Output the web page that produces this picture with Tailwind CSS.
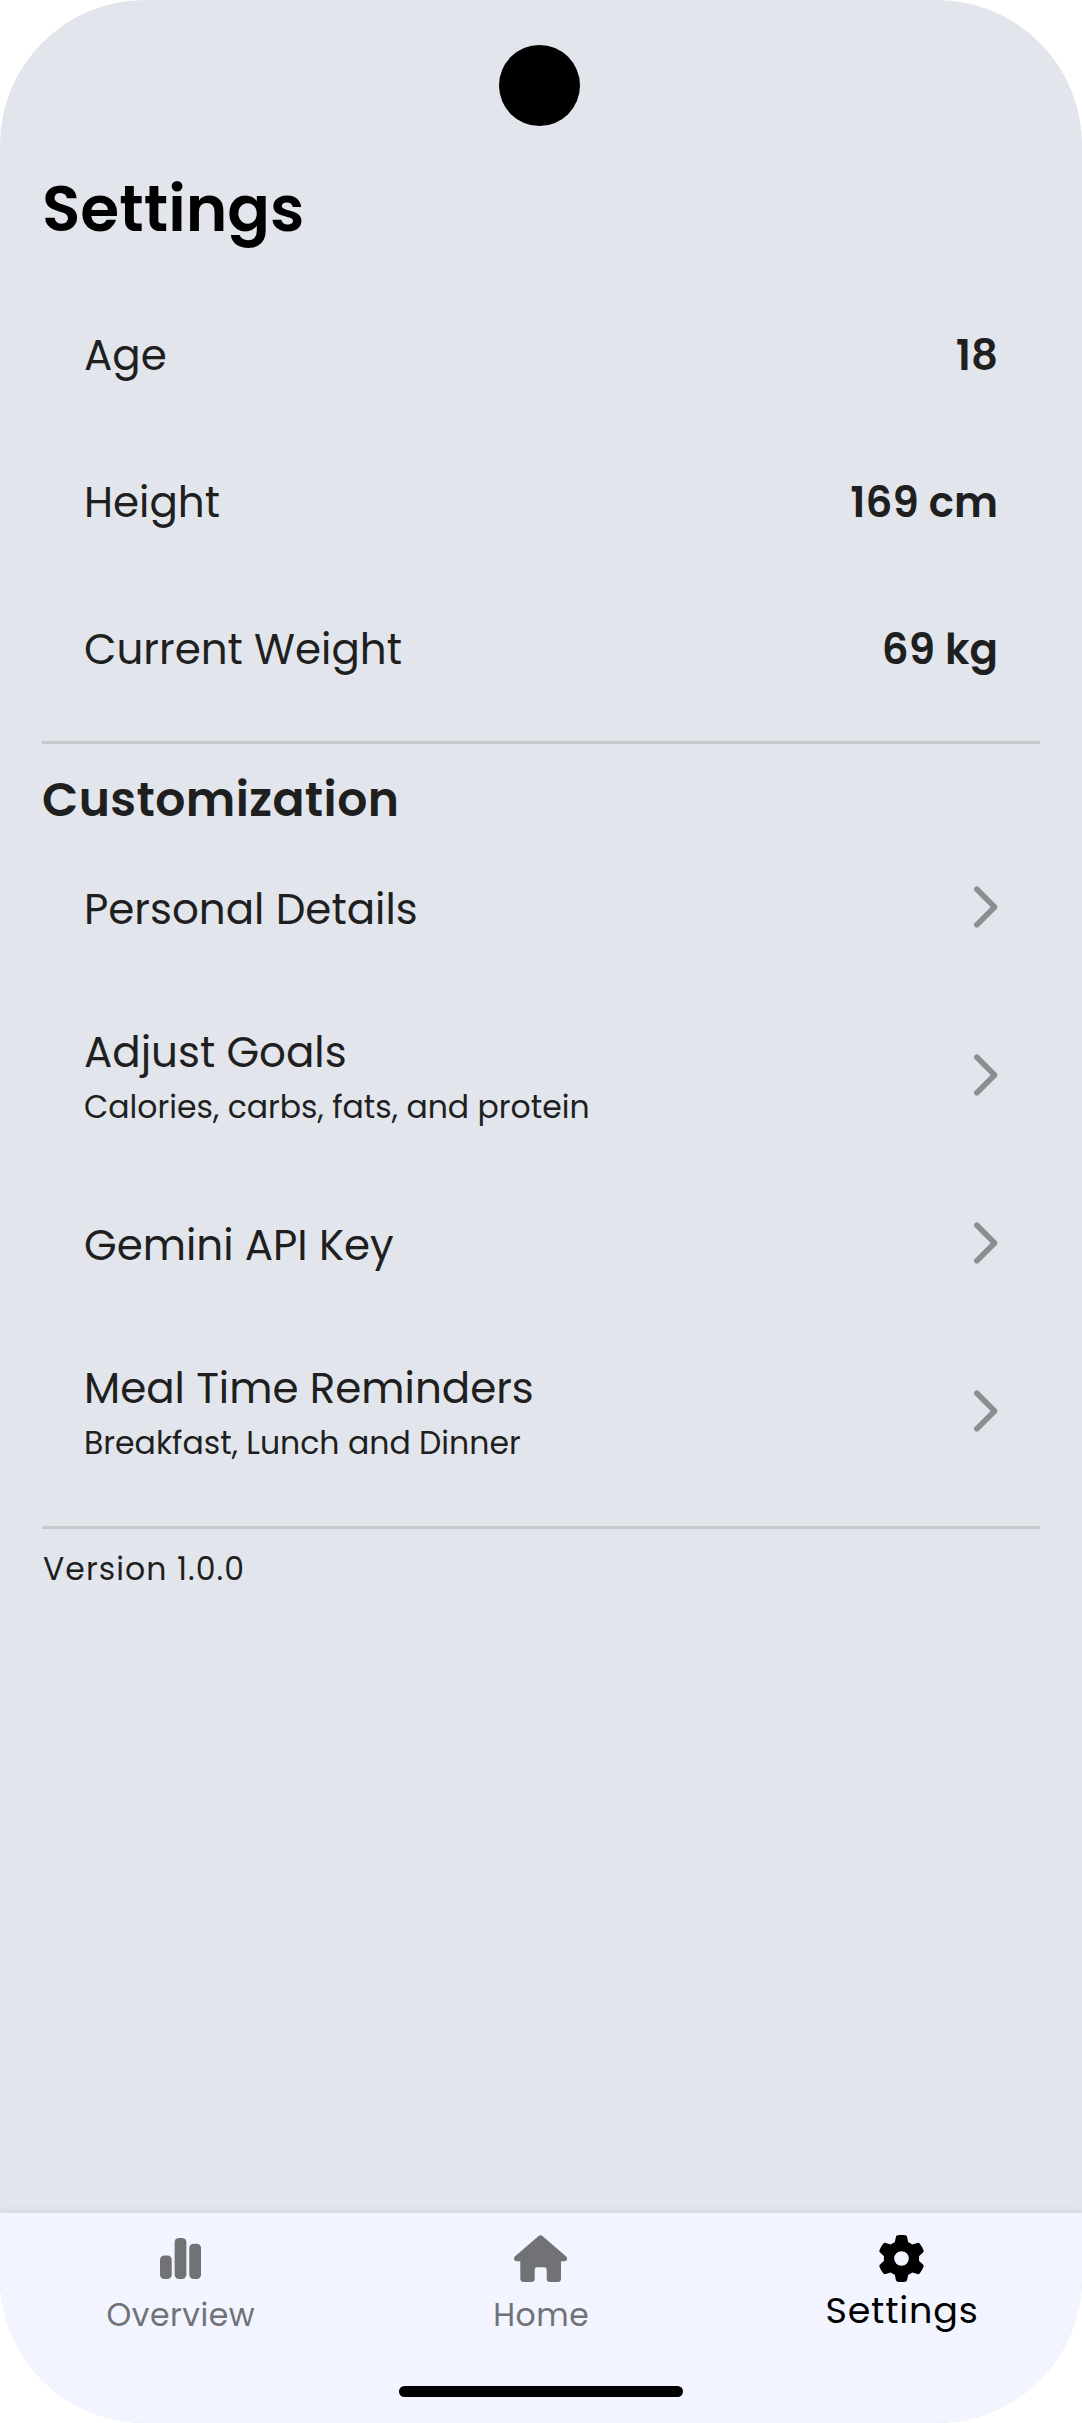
<!DOCTYPE html>
<html lang="en">
<head>
<meta charset="utf-8">
<title>Settings</title>
<script src="https://cdn.jsdelivr.net/npm/@tailwindcss/browser@4"></script>
</head>
<body class="bg-white font-[Poppins,Inter,sans-serif] text-[#1f1f1f]">
<div class="relative flex h-[2423px] w-[1081.5px] flex-col overflow-hidden rounded-[145px] bg-[#e2e5ec]">
  <div class="absolute left-[499px] top-[45px] size-[81px] rounded-full bg-black"></div>

  <main class="flex flex-1 flex-col pl-[42px] pr-[41.5px] pt-[163px]">
    <h1 class="text-[63px] leading-[93px] font-semibold text-black">Settings</h1>

    <dl class="mt-[26px] px-[42px] text-[42px]">
      <div class="flex h-[147px] items-center justify-between"><dt>Age</dt><dd class="font-semibold">18</dd></div>
      <div class="flex h-[147px] items-center justify-between"><dt>Height</dt><dd class="font-semibold">169 cm</dd></div>
      <div class="flex h-[147px] items-center justify-between"><dt>Current Weight</dt><dd class="font-semibold">69 kg</dd></div>
    </dl>

    <div class="mt-[18px] h-[3px] bg-[#c7c9cc]"></div>
    <h2 class="mt-[33px] text-[47.25px] leading-[46px] font-semibold tracking-[0.4px]">Customization</h2>

    <ul class="px-[42px]">
      <li class="flex h-[168px] items-center justify-between">
        <span class="pt-1.5 text-[42px] leading-[58px]">Personal Details</span>
        <svg class="h-[42px] w-[24px]" viewBox="0 0 24 42" fill="none" stroke="#8c8d90" stroke-width="5.6" stroke-linecap="round" stroke-linejoin="round"><path d="M2.9 3.3 20.6 21 2.9 38.7"/></svg>
      </li>
      <li class="flex h-[168px] items-center justify-between">
        <div class="pt-[2px]"><p class="text-[42px] leading-[62px]">Adjust Goals</p><p class="text-[31.5px] leading-[46px]">Calories, carbs, fats, and protein</p></div>
        <svg class="h-[42px] w-[24px]" viewBox="0 0 24 42" fill="none" stroke="#8c8d90" stroke-width="5.6" stroke-linecap="round" stroke-linejoin="round"><path d="M2.9 3.3 20.6 21 2.9 38.7"/></svg>
      </li>
      <li class="flex h-[168px] items-center justify-between">
        <span class="pt-1.5 text-[42px] leading-[58px]">Gemini API Key</span>
        <svg class="h-[42px] w-[24px]" viewBox="0 0 24 42" fill="none" stroke="#8c8d90" stroke-width="5.6" stroke-linecap="round" stroke-linejoin="round"><path d="M2.9 3.3 20.6 21 2.9 38.7"/></svg>
      </li>
      <li class="flex h-[168px] items-center justify-between">
        <div class="pt-[2px]"><p class="text-[42px] leading-[62px]">Meal Time Reminders</p><p class="text-[31.5px] leading-[46px]">Breakfast, Lunch and Dinner</p></div>
        <svg class="h-[42px] w-[24px]" viewBox="0 0 24 42" fill="none" stroke="#8c8d90" stroke-width="5.6" stroke-linecap="round" stroke-linejoin="round"><path d="M2.9 3.3 20.6 21 2.9 38.7"/></svg>
      </li>
    </ul>

    <div class="mt-[31px] h-[3px] bg-[#c7c9cc]"></div>
    <p class="mt-[18px] pl-px text-[31.5px] leading-[44px] tracking-[1.05px]">Version 1.0.0</p>
  </main>

  <nav class="relative grid h-[210px] grid-cols-3 bg-[#f2f4ff] text-[#717276] shadow-[0_-1px_8px_rgba(0,0,0,0.09)]">
    <a class="flex flex-col items-center pt-[22px]">
      <svg class="h-[47px] w-[41px]" viewBox="0 0 448 512" fill="currentColor"><rect x="0" y="224" width="128" height="256" rx="46"/><rect x="160" y="32" width="128" height="448" rx="46"/><rect x="320" y="96" width="128" height="384" rx="46"/></svg>
      <span class="mt-[10.5px] ml-px text-[31.5px] leading-[44px] tracking-[0.5px]">Overview</span>
    </a>
    <a class="flex flex-col items-center pt-[22px]">
      <svg class="h-[47px] w-[53px]" viewBox="0 0 53 47" fill="currentColor"><path d="M24.6 1Q26.5-.7 28.4 1L51.9 21.3Q53.7 23 52.8 24.8 52 26.3 50 26.3H47V43.5Q47 47 43.5 47H36Q32.7 47 32.7 43.8V35Q32.7 32.3 30 32.3H23.4Q20.7 32.3 20.7 35V43.8Q20.7 47 17.4 47H9.8Q6.3 47 6.3 43.5V26.3H3Q1 26.3.3 24.8-.6 23 1.1 21.3Z"/></svg>
      <span class="mt-[10.5px] ml-px text-[31.5px] leading-[44px] tracking-[0.5px]">Home</span>
    </a>
    <a class="flex flex-col items-center pt-[22px] text-black">
      <svg class="size-[47px]" viewBox="0 0 512 512" fill="currentColor"><path d="M495.9 166.6c3.2 8.7 .5 18.4-6.4 24.6l-43.3 39.4c1.1 8.3 1.7 16.8 1.7 25.4s-.6 17.1-1.7 25.4l43.3 39.4c6.9 6.2 9.6 15.9 6.4 24.6c-4.4 11.9-9.7 23.3-15.8 34.3l-4.7 8.1c-6.6 11-14 21.4-22.1 31.2c-5.9 7.2-15.7 9.6-24.5 6.8l-55.7-17.7c-13.4 10.3-28.2 18.9-44 25.4l-12.5 57.1c-2 9.1-9 16.3-18.2 17.8c-13.8 2.3-28 3.5-42.5 3.5s-28.7-1.2-42.5-3.5c-9.2-1.5-16.2-8.7-18.2-17.8l-12.5-57.1c-15.8-6.5-30.6-15.1-44-25.4L83.1 425.9c-8.8 2.8-18.6 .3-24.5-6.8c-8.1-9.8-15.5-20.2-22.1-31.2l-4.7-8.1c-6.1-11-11.4-22.4-15.8-34.3c-3.2-8.7-.5-18.4 6.4-24.6l43.3-39.4C64.6 273.1 64 264.6 64 256s.6-17.1 1.7-25.4L22.4 191.2c-6.9-6.2-9.6-15.9-6.4-24.6c4.4-11.9 9.7-23.3 15.8-34.3l4.7-8.1c6.6-11 14-21.4 22.1-31.2c5.9-7.2 15.7-9.6 24.5-6.8l55.7 17.7c13.4-10.3 28.2-18.9 44-25.4l12.5-57.1c2-9.1 9-16.3 18.2-17.8C227.3 1.2 241.5 0 256 0s28.7 1.2 42.5 3.5c9.2 1.5 16.2 8.7 18.2 17.8l12.5 57.1c15.8 6.5 30.6 15.1 44 25.4l55.7-17.7c8.8-2.8 18.6-.3 24.5 6.8c8.1 9.8 15.5 20.2 22.1 31.2l4.7 8.1c6.1 11 11.4 22.4 15.8 34.3zM256 336a80 80 0 1 0 0-160 80 80 0 1 0 0 160z"/></svg>
      <span class="mt-[7px] ml-[1.5px] text-[36.5px] leading-[44px] tracking-[0.8px]">Settings</span>
    </a>
    <div class="absolute left-[399px] top-[173px] h-[11px] w-[284px] rounded-full bg-black"></div>
  </nav>
</div>
</body>
</html>
